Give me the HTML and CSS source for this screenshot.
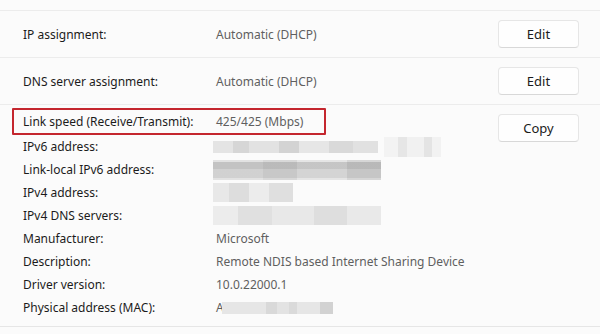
FILE: index.html
```html
<!DOCTYPE html>
<html>
<head>
<meta charset="utf-8">
<link rel="stylesheet" href="styles.css">
</head>
<body>
<div class="page">
  <div class="top-strip"></div>
  <div class="row">
    <span class="label">IP assignment:</span>
    <span class="value">Automatic (DHCP)</span>
    <button class="btn">Edit</button>
  </div>
  <div class="row">
    <span class="label">DNS server assignment:</span>
    <span class="value">Automatic (DHCP)</span>
    <button class="btn">Edit</button>
  </div>
  <div class="details">
    <div class="list">
      <div class="item highlight">
        <span class="label">Link speed (Receive/Transmit):</span>
        <span class="value">425/425 (Mbps)</span>
      </div>
      <div class="item">
        <span class="label">IPv6 address:</span>
        <span class="value"><span class="blur b-ipv6"></span><span class="blur b-ipv6b"></span></span>
      </div>
      <div class="item">
        <span class="label">Link-local IPv6 address:</span>
        <span class="value"><span class="blur b-ll"></span></span>
      </div>
      <div class="item">
        <span class="label">IPv4 address:</span>
        <span class="value"><span class="blur b-v4"></span></span>
      </div>
      <div class="item">
        <span class="label">IPv4 DNS servers:</span>
        <span class="value"><span class="blur b-dns"></span></span>
      </div>
      <div class="item">
        <span class="label">Manufacturer:</span>
        <span class="value">Microsoft</span>
      </div>
      <div class="item">
        <span class="label">Description:</span>
        <span class="value">Remote NDIS based Internet Sharing Device</span>
      </div>
      <div class="item">
        <span class="label">Driver version:</span>
        <span class="value">10.0.22000.1</span>
      </div>
      <div class="item">
        <span class="label">Physical address (MAC):</span>
        <span class="value">A<span class="blur b-mac"></span></span>
      </div>
    </div>
    <div class="side">
      <button class="btn">Copy</button>
    </div>
  </div>
  <div class="bottom-strip"></div>
</div>
</body>
</html>
```
FILE: styles.css
```css
html, body {
  margin: 0;
  padding: 0;
}
body {
  background: #fbfbfb;
  font-family: "Noto Sans", "Open Sans", sans-serif;
  font-size: 12px;
  color: #1b1b1b;
  width: 600px;
  height: 334px;
  overflow: hidden;
}
.page {
  display: flex;
  flex-direction: column;
}
.top-strip {
  height: 10px;
  border-bottom: 1px solid #ececec;
}
.row {
  display: flex;
  align-items: center;
  height: 46px;
  padding-left: 23px;
  padding-right: 21px;
  border-bottom: 1px solid #ececec;
}
.row .label {
  width: 193px;
}
.row .value {
  flex: 1;
  color: #5f5f5f;
}
.btn {
  width: 81px;
  height: 28px;
  background: #fefefe;
  border: 1px solid #e6e6e6;
  border-bottom-color: #d8d8d8;
  border-radius: 4px;
  font-family: inherit;
  font-size: 13px;
  color: #1b1b1b;
  padding: 0;
}
.details {
  display: flex;
  padding: 3px 21px 0 12px;
  height: 222px;
  box-sizing: border-box;
  border-bottom: 1px solid #e6e6e6;
}
.list {
  flex: 1;
  display: flex;
  flex-direction: column;
}
.item {
  display: flex;
  align-items: center;
  height: 23px;
  padding-left: 11px;
}
.item .label {
  width: 193px;
  flex: none;
}
.item .value {
  color: #5f5f5f;
  display: flex;
  align-items: center;
}
.highlight {
  align-self: flex-start;
  box-sizing: border-box;
  height: 27px;
  padding: 0 21px 0 9px;
  border: 2px solid #c4262e;
  border-radius: 1px;
}
.side {
  padding-top: 6px;
}
.blur {
  display: inline-block;
  height: 12px;
}
.b-ipv6 {
  width: 165px;
  margin-left: -3px;
  background: linear-gradient(90deg, #e4e4e4 0 12%, #d6d6d6 12% 22%, #e2e2e2 22% 40%, #d3d3d3 40% 52%, #e6e6e6 52% 70%, #d9d9d9 70% 85%, #e1e1e1 85% 100%);
}
.b-ipv6b {
  width: 57px;
  height: 20px;
  margin-left: 6px;
  background: linear-gradient(90deg, #f3f3f3 0 25%, #e6e6e6 25% 40%, #f1f1f1 40% 70%, #e4e4e4 70% 85%, #f2f2f2 85% 100%);
}
.b-ll {
  width: 168px;
  height: 20px;
  margin-left: -3px;
  background: linear-gradient(180deg, transparent 0 10%, #dcdcdc 10% 45%, #ececec 45% 90%, transparent 90%),
              linear-gradient(90deg, #e2e2e2 0 30%, #d8d8d8 30% 50%, #e5e5e5 50% 80%, #d6d6d6 80% 100%);
  background-blend-mode: multiply;
}
.b-v4 {
  width: 80px;
  height: 19px;
  margin-left: -3px;
  background: linear-gradient(90deg, #e8e8e8 0 20%, #dddddd 20% 45%, #ececec 45% 70%, #dfdfdf 70% 100%);
}
.b-dns {
  width: 168px;
  height: 19px;
  margin-left: -3px;
  background: linear-gradient(90deg, #ececec 0 15%, #e0e0e0 15% 35%, #e8e8e8 35% 60%, #dedede 60% 80%, #e9e9e9 80% 100%);
}
.b-mac {
  width: 111px;
  height: 12px;
  margin-left: -2px;
  background: linear-gradient(90deg, #e6e6e6 0 40%, #d9d9d9 40% 50%, #e3e3e3 50% 60%, #dadada 60% 68%, #e6e6e6 68% 88%, #d2d2d2 88% 100%);
}
.bottom-strip {
  flex: 1;
  height: 8px;
  background: #f3f3f3;
}
```
